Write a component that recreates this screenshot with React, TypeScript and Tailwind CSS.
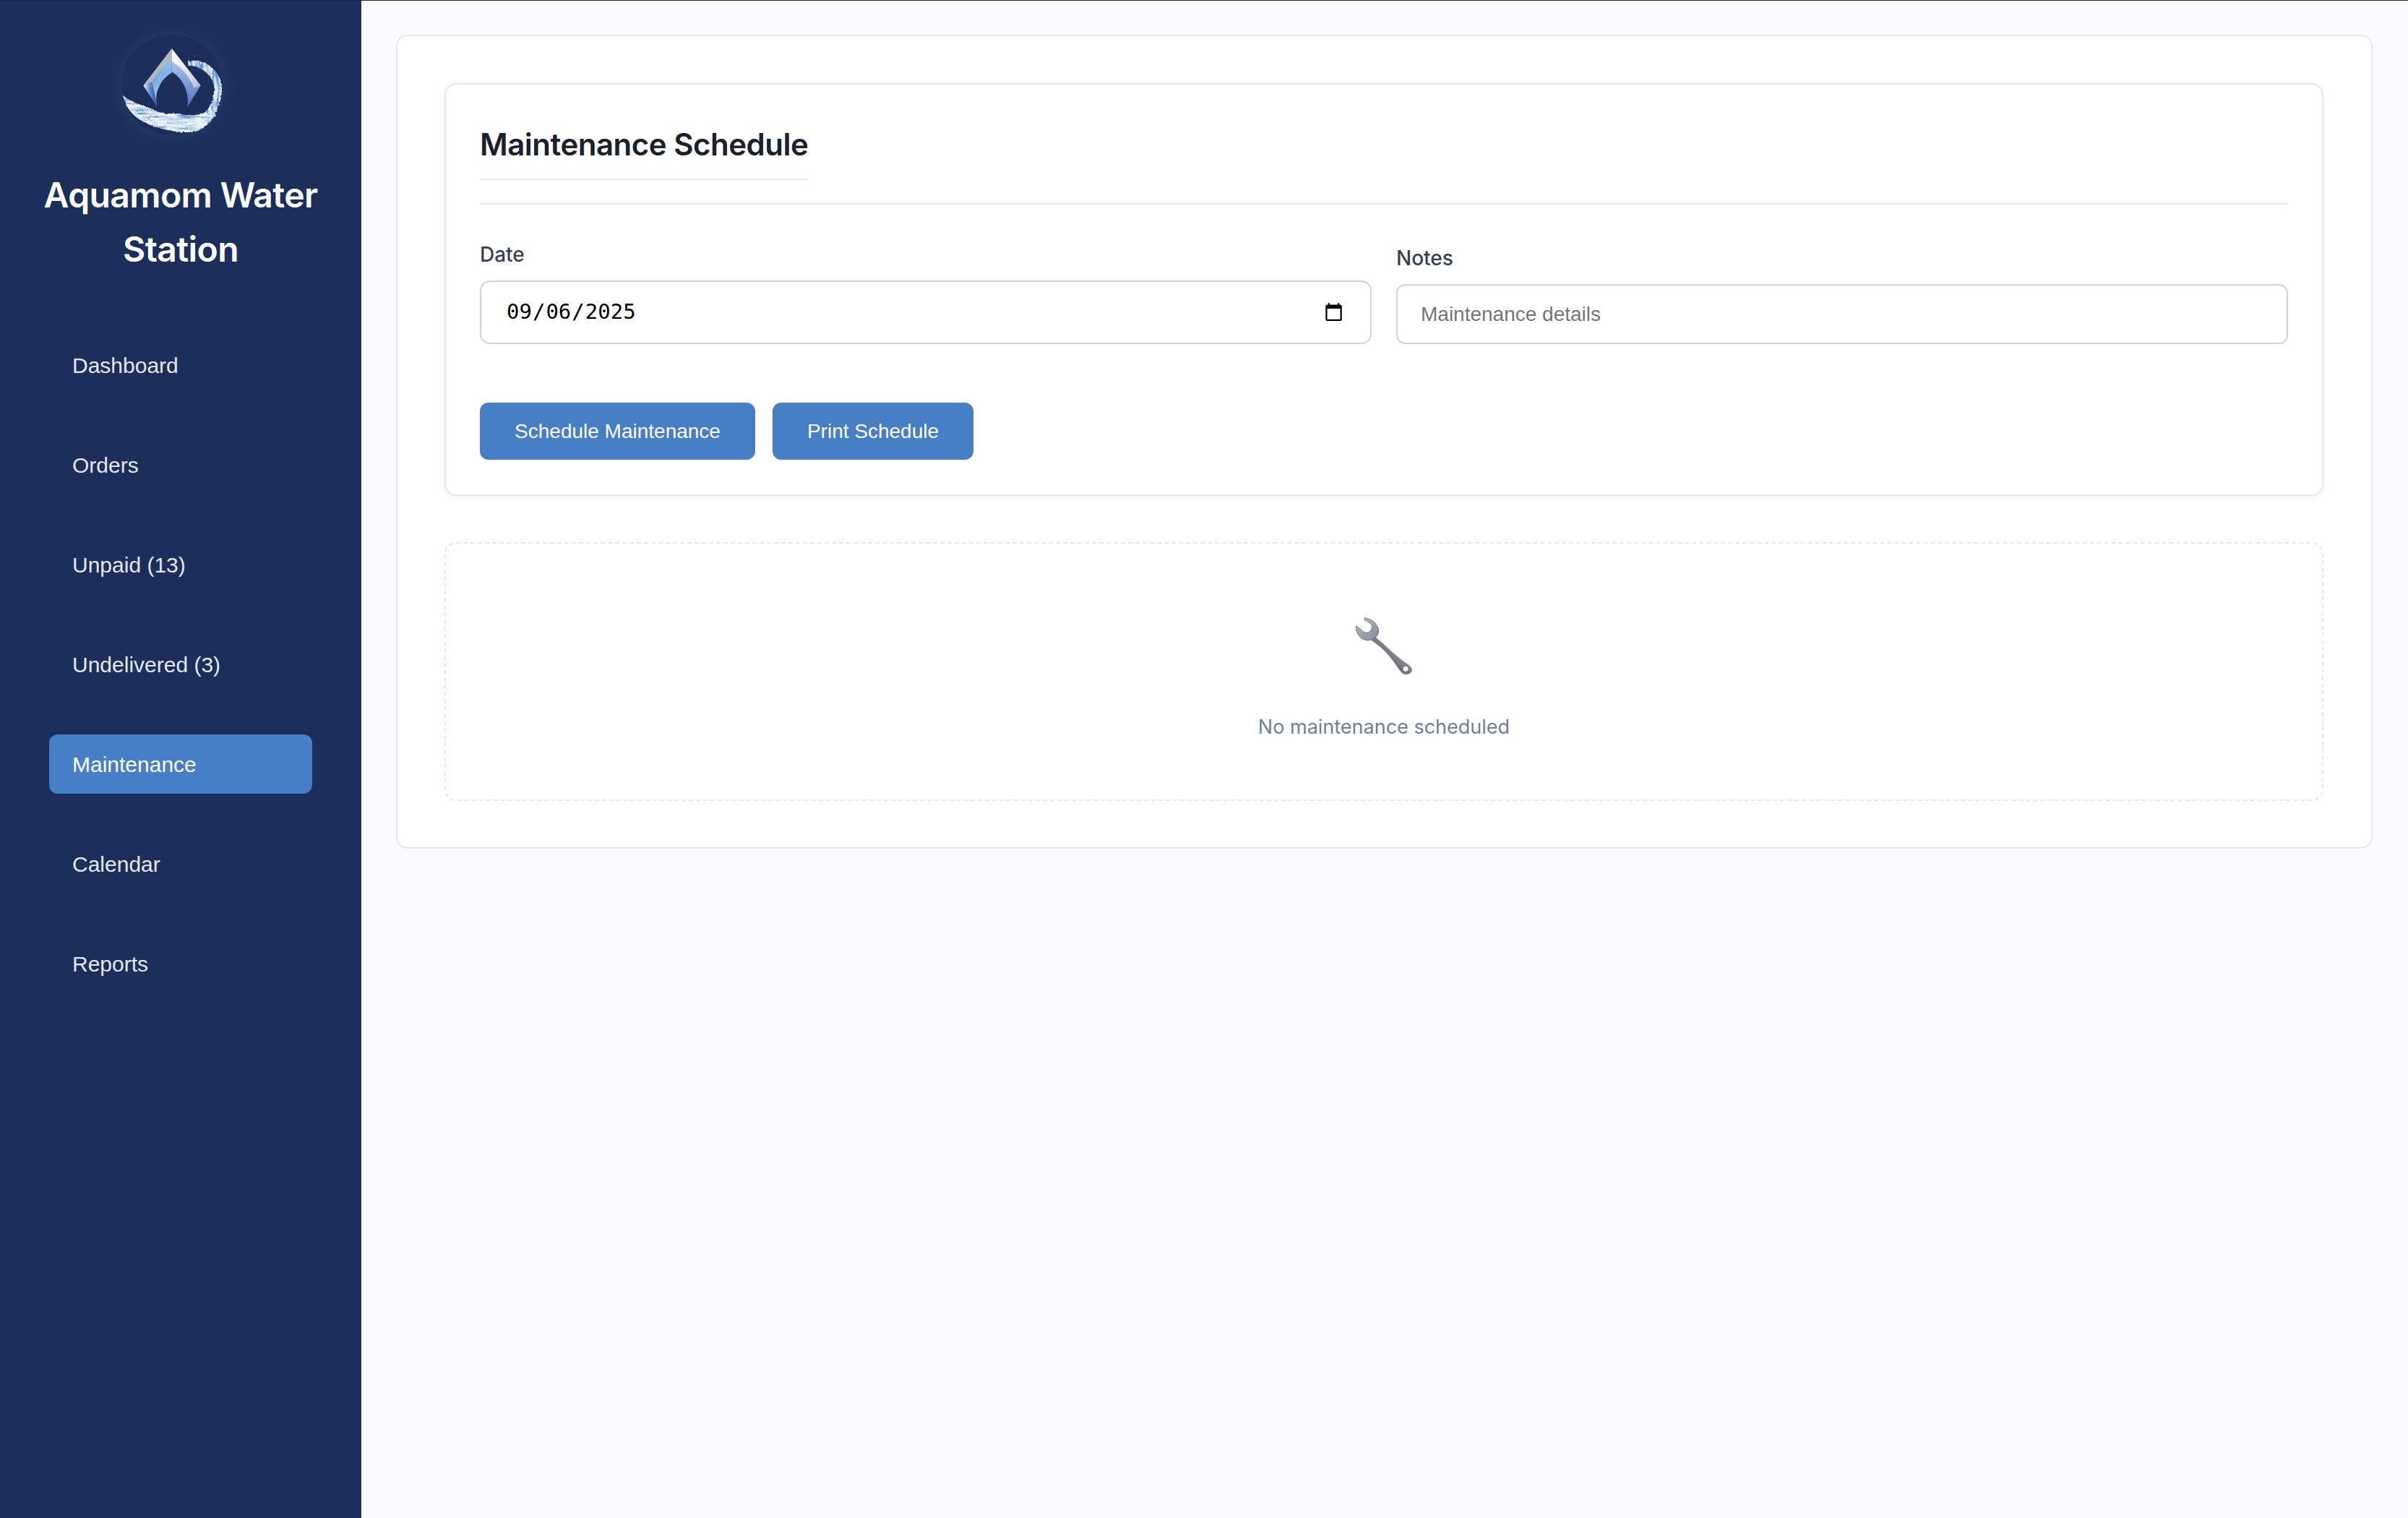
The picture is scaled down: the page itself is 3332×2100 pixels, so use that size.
import React from "react";

const NAV = ["Dashboard", "Orders", "Unpaid (13)", "Undelivered (3)", "Maintenance", "Calendar", "Reports"];

function Logo() {
  return (
    <svg width="200" height="170" viewBox="0 0 600 510" className="block">
      <defs>
        <radialGradient id="glow" cx="50%" cy="50%" r="50%">
          <stop offset="62%" stopColor="#2f4f8f" stopOpacity="0.75" />
          <stop offset="100%" stopColor="#1c2f5a" stopOpacity="0" />
        </radialGradient>
        <linearGradient id="cl" x1="0" y1="0" x2="1" y2="1">
          <stop offset="0" stopColor="#dfe6ee" />
          <stop offset="0.35" stopColor="#6f8fae" />
          <stop offset="0.6" stopColor="#8fc0ee" />
          <stop offset="1" stopColor="#2f5ea8" />
        </linearGradient>
        <linearGradient id="cr" x1="0" y1="0" x2="1" y2="1">
          <stop offset="0" stopColor="#ffffff" />
          <stop offset="0.7" stopColor="#d5dcea" />
          <stop offset="1" stopColor="#a9b8dc" />
        </linearGradient>
        <linearGradient id="cb" x1="0" y1="0" x2="0" y2="1">
          <stop offset="0" stopColor="#c9d9f3" />
          <stop offset="1" stopColor="#4f6fc0" />
        </linearGradient>
        <linearGradient id="cs" x1="0" y1="0" x2="1" y2="0">
          <stop offset="0" stopColor="#eef3fa" />
          <stop offset="0.5" stopColor="#5d86c8" />
          <stop offset="1" stopColor="#2b4f96" />
        </linearGradient>
        <filter id="waveH" x="-10%" y="-10%" width="120%" height="120%">
          <feTurbulence type="fractalNoise" baseFrequency="0.012 0.11" numOctaves="3" seed="7" result="n" />
          <feColorMatrix in="n" type="matrix" values="0 0 0 0 0.12  0 0 0 0 0.36  0 0 0 0 0.72  3.6 0 0 0 -1.55" result="streak" />
          <feComposite in="streak" in2="SourceAlpha" operator="in" result="clip" />
          <feMerge result="m"><feMergeNode in="SourceGraphic" /><feMergeNode in="clip" /></feMerge>
          <feTurbulence type="fractalNoise" baseFrequency="0.09" numOctaves="3" seed="4" result="r" />
          <feDisplacementMap in="m" in2="r" scale="12" />
        </filter>
        <filter id="waveV" x="-20%" y="-10%" width="140%" height="120%">
          <feTurbulence type="fractalNoise" baseFrequency="0.11 0.012" numOctaves="3" seed="11" result="n" />
          <feColorMatrix in="n" type="matrix" values="0 0 0 0 0.1  0 0 0 0 0.3  0 0 0 0 0.66  3.8 0 0 0 -1.4" result="streak" />
          <feComposite in="streak" in2="SourceAlpha" operator="in" result="clip" />
          <feMerge result="m"><feMergeNode in="SourceGraphic" /><feMergeNode in="clip" /></feMerge>
          <feTurbulence type="fractalNoise" baseFrequency="0.09" numOctaves="3" seed="9" result="r" />
          <feDisplacementMap in="m" in2="r" scale="12" />
        </filter>
        <filter id="soft"><feGaussianBlur stdDeviation="1.2" /></filter>
      </defs>
      <circle cx="323" cy="263" r="290" fill="url(#glow)" opacity="0.55" />
      <circle cx="323" cy="263" r="210" fill="#1c2e59" />
      <g filter="url(#soft)">
        <path d="M323 112 L205 265 L262 352 C252 310 262 250 323 208 Z" fill="url(#cl)" />
        <path d="M323 112 L443 265 L388 355 C396 300 375 240 323 208 Z" fill="url(#cb)" />
        <path d="M323 112 L443 265 L416 275 C395 225 360 185 323 165 Z" fill="url(#cr)" />
        <path d="M323 112 L323 165 C290 180 262 215 240 250 L205 265 Z" fill="#aeb9c4" />
        <path d="M262 235 C285 205 305 195 323 190 L323 212 C295 228 275 250 265 285 Z" fill="#7fb4e6" />
        <path d="M205 265 L240 250 C250 280 255 320 262 352 Z" fill="url(#cs)" />
      </g>
      <path filter="url(#waveH)" d="M120 305 C150 335 215 350 255 368 C280 385 320 380 350 382 C385 392 440 392 470 372 L505 385 C490 415 450 450 420 456 C380 465 320 452 320 452 C260 440 210 425 170 392 C140 365 128 335 120 305 Z" fill="#eef4fb" />
      <path filter="url(#waveV)" d="M465 376 C490 340 505 300 498 262 C490 220 440 180 392 182 L390 166 C440 150 495 178 525 240 C540 300 520 365 490 402 Z" fill="#e6eff9" />
      <circle cx="418" cy="142" r="2" fill="#9fb8d8" />
    </svg>
  );
}

function Wrench() {
  return (
    <svg width="84" height="85" viewBox="670 90 252 255" className="block">
      <defs>
        <linearGradient id="wh" x1="0" y1="0" x2="1" y2="1">
          <stop offset="0" stopColor="#b4bec9" />
          <stop offset="1" stopColor="#818c99" />
        </linearGradient>
        <linearGradient id="wb" x1="0" y1="1" x2="1" y2="0">
          <stop offset="0.25" stopColor="#55505a" />
          <stop offset="0.5" stopColor="#7c7d86" />
          <stop offset="0.75" stopColor="#a3a9b2" />
        </linearGradient>
      </defs>
      <path d="M757 178 C800 215 840 255 880 285 C900 296 914 306 912 320 C908 334 892 338 876 333 C860 320 850 300 832 276 C805 240 775 215 745 194 Z" fill="url(#wb)" stroke="#5a565c" strokeWidth="1" />
      <path d="M717 101 C748 106 770 128 774 152 C776 170 762 184 745 192 C722 200 696 188 686 165 C680 154 678 145 682 135 L712 160 C725 168 742 160 747 142 C749 128 732 116 715 110 Z" fill="url(#wh)" stroke="#4a4c52" strokeWidth="2" strokeLinejoin="round" />
      <circle cx="886" cy="313" r="12" fill="#ffffff" stroke="#55525a" strokeWidth="2" />
    </svg>
  );
}

export default function App() {
  return (
    <div className="flex flex-col h-[2100px] w-[3332px] overflow-hidden bg-[#f9fafb] font-['Inter',sans-serif]">
      <div className="h-px shrink-0 bg-[#222222]" />
      <div className="flex flex-1 min-h-0">
        <aside className="w-[500px] shrink-0 bg-[#1c2f5a] flex flex-col">
          <div className="pt-[29px] pl-[130px]">
            <Logo />
          </div>
          <h1 className="mt-[32px] text-center text-[48px] leading-[75px] tracking-[-0.6px] font-semibold text-white px-[40px]">
            Aquamom Water Station
          </h1>
          <nav className="mt-[82px] mx-[68px] flex flex-col gap-[56px] font-['Liberation_Sans',sans-serif] text-[30px]">
            {NAV.map((n) => (
              <div
                key={n}
                className={
                  n === "Maintenance"
                    ? "h-[82px] flex items-center pl-[32px] rounded-[12px] bg-[#477fc7] text-white"
                    : "h-[82px] flex items-center pl-[32px] rounded-[12px] text-[#e2e8f0]"
                }
              >
                {n}
              </div>
            ))}
          </nav>
        </aside>
        <main className="flex-1 min-w-0 pl-[48px] pr-[49px] pt-[47px]">
          <section className="bg-white border-2 border-[#e5e7eb] rounded-[16px] pl-[65px] pr-[66px] pt-[65px] pb-[64px]">
            <div className="bg-white border-2 border-[#e5e7eb] rounded-[16px] pl-[47px] pr-[47px] pt-[47px] pb-[48px] shadow-[0_2px_8px_rgba(0,0,0,0.06)]">
              <div className="border-b-2 border-[#e5e7eb] pb-[32px]">
                <h2 className="inline-block text-[42px] leading-[71px] font-semibold text-[#1a202c] border-b-2 border-[#e5e7eb] pb-[12px] tracking-[-0.5px]">
                  Maintenance Schedule
                </h2>
              </div>
              <div className="mt-[51px] grid grid-cols-2 gap-[34px] items-end">
                <div>
                  <label className="block text-[28px] leading-[36px] font-medium text-[#374151] mb-[18px]">Date</label>
                  <input
                    type="date"
                    defaultValue="2025-09-06"
                    className="block w-full h-[88px] border-2 border-[#d1d5db] rounded-[14px] bg-white px-[34px] font-['DejaVu_Sans_Mono',monospace] text-[29px] text-black shadow-[inset_0_1px_2px_rgba(0,0,0,0.05)]"
                  />
                </div>
                <div>
                  <label className="block text-[28px] leading-[36px] font-medium text-[#374151] mb-[18px]">Notes</label>
                  <input
                    type="text"
                    placeholder="Maintenance details"
                    className="block w-full h-[83px] border-2 border-[#d1d5db] rounded-[12px] bg-white px-[32px] font-['Liberation_Sans',sans-serif] text-[28px] placeholder:text-[#757575] shadow-[inset_0_1px_2px_rgba(0,0,0,0.05)]"
                  />
                </div>
              </div>
              <div className="mt-[81px] flex gap-[24px] font-['Liberation_Sans',sans-serif]">
                <button className="h-[79px] w-[381px] rounded-[12px] bg-[#477fc7] text-white text-[28px]">Schedule Maintenance</button>
                <button className="h-[79px] w-[278px] rounded-[12px] bg-[#477fc7] text-white text-[28px]">Print Schedule</button>
              </div>
            </div>
            <div className="mt-[64px] h-[358px] border-2 border-dashed border-[#e5e7eb] rounded-[16px] flex flex-col items-center pt-[99px]">
              <Wrench />
              <p className="mt-[50px] text-[27px] leading-[40px] text-[#718096]">No maintenance scheduled</p>
            </div>
          </section>
        </main>
      </div>
    </div>
  );
}
